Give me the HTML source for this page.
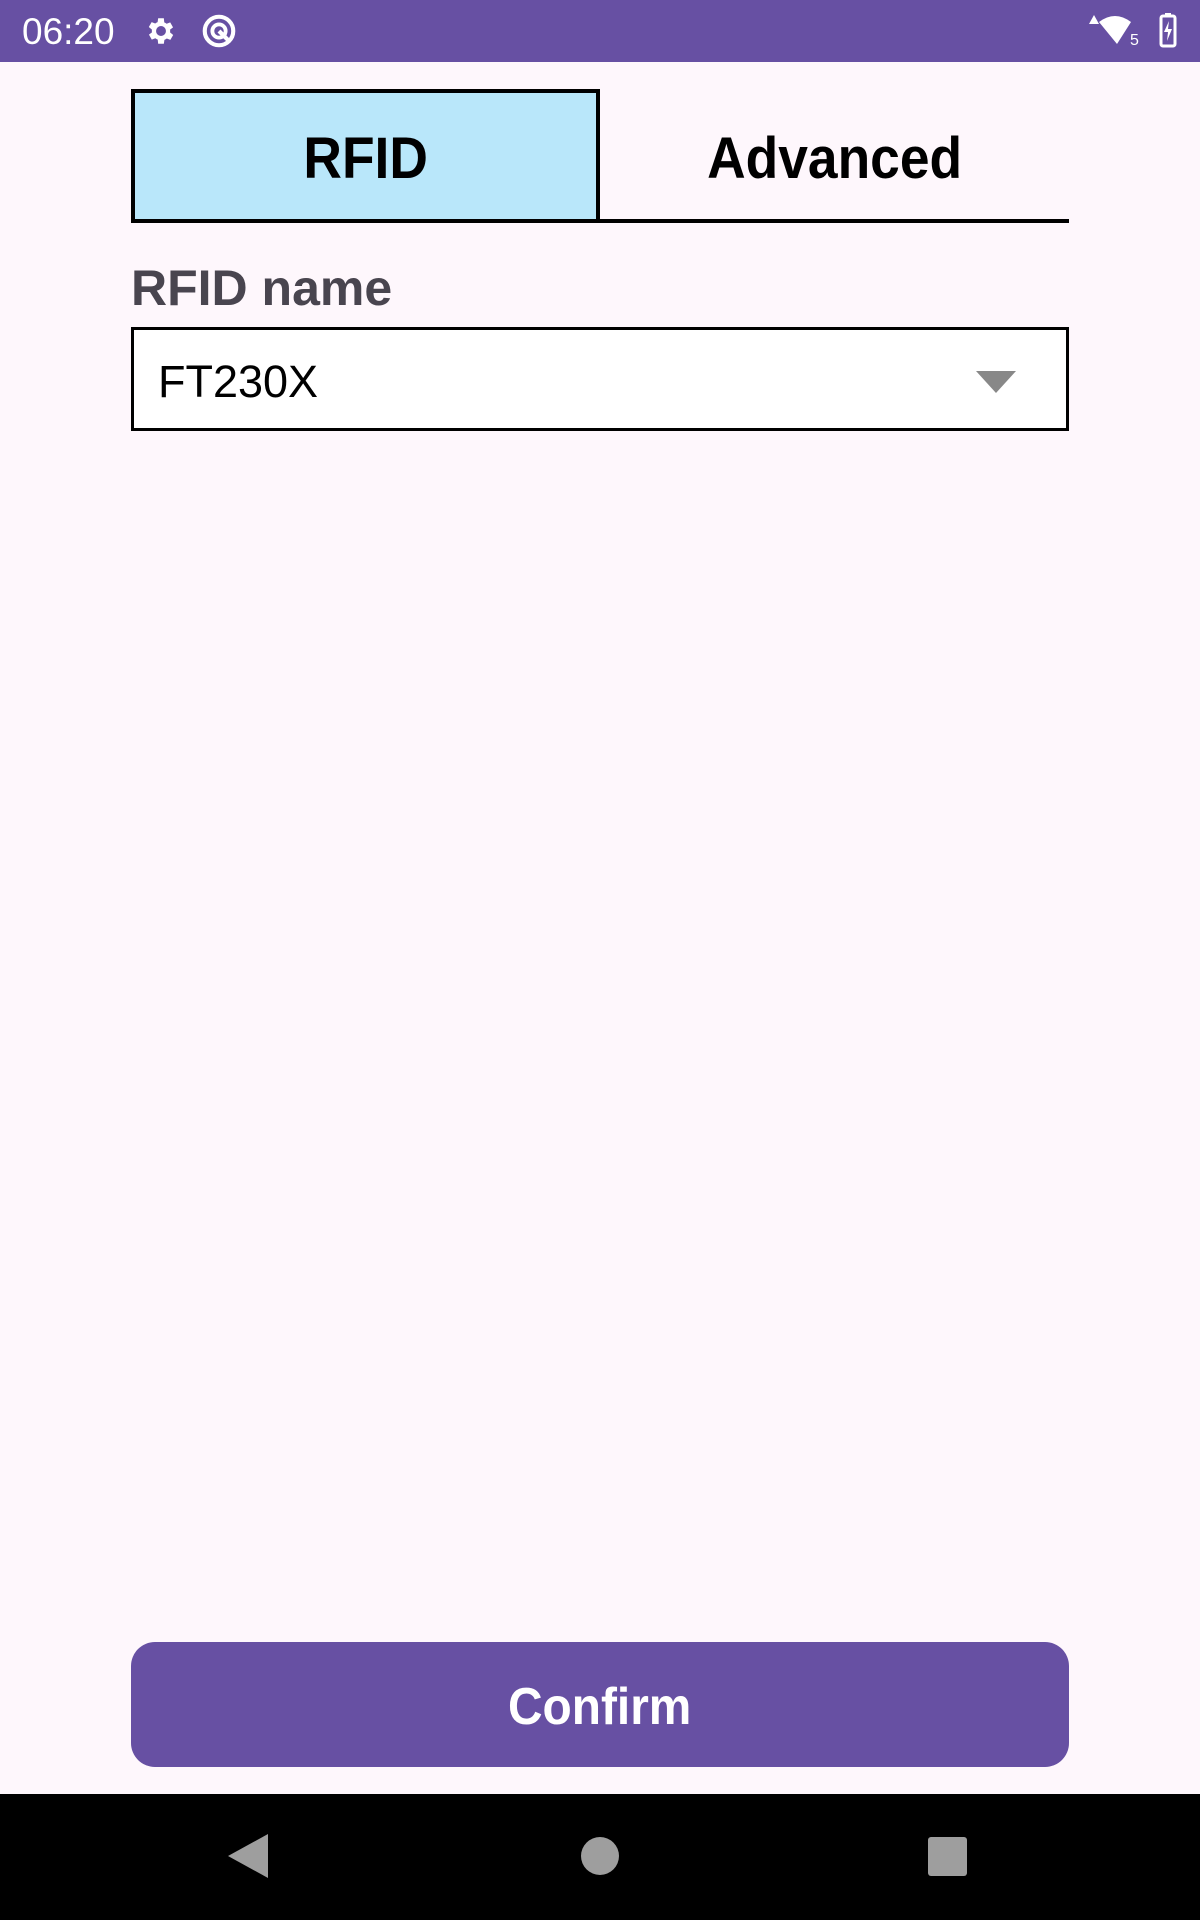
<!DOCTYPE html>
<html><head><meta charset="utf-8"><style>
*{margin:0;padding:0;box-sizing:border-box}
body{width:1200px;height:1920px;background:#fef7fc;font-family:"Liberation Sans",sans-serif;position:relative;overflow:hidden}
.sb{position:absolute;left:0;top:0;width:1200px;height:62px;background:#6750a3;color:#fff}
.abs{position:absolute}
.sq{display:inline-block;transform:scaleX(0.92)}
</style></head><body>
<div class="sb">
 <div class="abs" style="left:22px;top:11px;font-size:37px;">06:20</div>
 <svg class="abs" style="left:144px;top:14px" width="34" height="34" viewBox="0 0 24 24"><path fill="#fff" d="M19.4 13a7.5 7.5 0 0 0 0-2l2.1-1.6-2-3.5-2.5 1a7 7 0 0 0-1.7-1L15 3h-4l-.4 2.7a7 7 0 0 0-1.7 1l-2.5-1-2 3.5L6.6 11a7.5 7.5 0 0 0 0 2l-2.1 1.6 2 3.5 2.5-1a7 7 0 0 0 1.7 1L11 21h4l.4-2.7a7 7 0 0 0 1.7-1l2.5 1 2-3.5zM13 15.5a3.5 3.5 0 1 1 0-7 3.5 3.5 0 0 1 0 7z" transform="translate(-1 0)"/></svg>
 <svg class="abs" style="left:200px;top:12px" width="38" height="38" viewBox="0 0 24 24"><circle cx="12" cy="12" r="9" fill="none" stroke="#fff" stroke-width="2.6"/><circle cx="12" cy="12" r="4.2" fill="none" stroke="#fff" stroke-width="2.4"/><path d="M12 12l6 6" stroke="#fff" stroke-width="2.6"/></svg>
 <svg class="abs" style="left:1085px;top:12px" width="100" height="38" viewBox="0 0 100 38"><path d="M4 12l5-9 5 9z" fill="#fff"/><path d="M14 10q16-12 32 0l-14 22z" fill="#fff"/><text x="45" y="33" font-size="16" fill="#fff" font-family="Liberation Sans">5</text><rect x="76" y="4" width="14" height="30" rx="2" fill="none" stroke="#fff" stroke-width="3"/><rect x="80" y="1" width="6" height="4" fill="#fff"/><path d="M84 9l-5 11h4l-1 9 5-12h-4z" fill="#fff"/></svg>
</div>
<div class="abs" style="left:131px;top:89px;width:469px;height:134px;background:#b9e7fa;border:4px solid #000;"></div>
<div class="abs" style="left:131px;top:219px;width:938px;height:4px;background:#000"></div>
<div class="abs" style="left:131px;top:92px;width:469px;height:134px;line-height:134px;text-align:center;font-size:58px;font-weight:bold"><span class="sq">RFID</span></div>
<div class="abs" style="left:600px;top:92px;width:469px;height:134px;line-height:134px;text-align:center;font-size:58px;font-weight:bold"><span class="sq">Advanced</span></div>
<div class="abs" style="left:131px;top:259px;font-size:50px;font-weight:bold;color:#49454f">RFID name</div>
<div class="abs" style="left:131px;top:327px;width:938px;height:104px;border:3px solid #000;background:#fff"></div>
<div class="abs" style="left:158px;top:356px;font-size:45px;color:#000">FT230X</div>
<svg class="abs" style="left:976px;top:371px" width="40" height="22"><path d="M0 0h40L20 22z" fill="#888"/></svg>
<div class="abs" style="left:131px;top:1642px;width:938px;height:125px;background:#6750a3;border-radius:24px;color:#fff;font-size:52px;font-weight:bold;text-align:center;line-height:131px"><span class="sq">Confirm</span></div>
<div class="abs" style="left:0;top:1794px;width:1200px;height:126px;background:#000"></div>
<svg class="abs" style="left:228px;top:1834px" width="42" height="44"><path d="M40 0v44L0 22z" fill="#9e9e9e"/></svg>
<div class="abs" style="left:581px;top:1837px;width:38px;height:38px;border-radius:50%;background:#9e9e9e"></div>
<div class="abs" style="left:928px;top:1837px;width:39px;height:39px;border-radius:3px;background:#9e9e9e"></div>
</body></html>
